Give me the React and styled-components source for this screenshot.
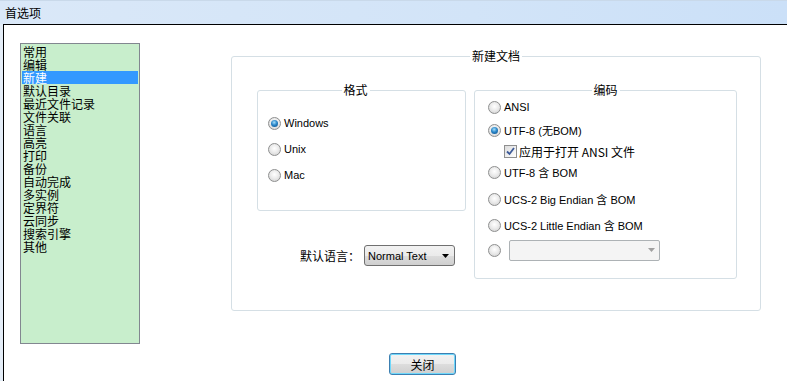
import React from 'react';
import styled, { createGlobalStyle } from 'styled-components';

const cjk = `'Noto Sans CJK SC', 'Liberation Sans', sans-serif`;

const GlobalStyle = createGlobalStyle`
  html, body {
    margin: 0;
    padding: 0;
    background: #ffffff;
  }
  body {
    font-family: 'Liberation Sans', 'Noto Sans CJK SC', sans-serif;
    font-size: 11px;
    color: #000000;
  }
`;

const Screen = styled.div`
  width: 787px;
  height: 381px;
  display: flex;
  flex-direction: column;
  overflow: hidden;
  background: #e4edf7;
`;

const TitleBar = styled.div`
  height: 24px;
  flex: none;
  display: flex;
  align-items: center;
  padding-left: 5px;
  font-family: ${cjk};
  font-size: 12px;
  background: linear-gradient(to right, #dae8f8, #d2e4f8 60%, #cbe0f8);
  box-shadow: inset 0 1px 0 #c9d9ea;
`;

const Body = styled.div`
  flex: 1;
  display: flex;
  align-items: flex-start;
  margin-left: 3px;
  padding: 18px 0 0 16px;
  border-left: 1px solid #000000;
  border-top: 1px solid #000000;
  background: #ffffff;
`;

const CategoryList = styled.ul`
  list-style: none;
  margin: 0;
  box-sizing: border-box;
  width: 120px;
  height: 301px;
  padding: 1px;
  border: 1px solid #828790;
  background: #c8eecc;
  flex: none;
`;

const CategoryItem = styled.li`
  height: 13px;
  line-height: 13px;
  padding-left: 1px;
  font-family: ${cjk};
  font-size: 12px;
  white-space: nowrap;
  color: ${p => (p.selected ? '#ffffff' : '#000000')};
  background: ${p => (p.selected ? '#3399ff' : 'transparent')};
`;

const Main = styled.div`
  margin: 13px 0 0 91px;
  display: flex;
  flex-direction: column;
`;

const Group = styled.div`
  position: relative;
  box-sizing: border-box;
  width: ${p => p.w}px;
  height: ${p => p.h}px;
  border: 1px solid #d5dfe5;
  border-radius: 3px;
  padding: ${p => p.pad};
`;

const Caption = styled.span`
  position: absolute;
  top: -8px;
  left: 50%;
  transform: translateX(calc(-50% + ${p => p.shift || 0}px));
  padding: 0 2px;
  background: #ffffff;
  font-family: ${cjk};
  font-size: 12px;
  line-height: 14px;
  white-space: nowrap;
`;

const Columns = styled.div`
  display: flex;
  align-items: flex-start;
  gap: 8px;
`;

const LeftColumn = styled.div`
  width: 209px;
  display: flex;
  flex-direction: column;
`;

const Option = styled.label`
  display: flex;
  align-items: center;
  height: ${p => p.h || 20}px;
  margin-top: ${p => p.top || 0}px;
  margin-left: ${p => p.indent || 0}px;
  white-space: nowrap;
`;

const RadioDot = styled.span`
  width: 13px;
  height: 13px;
  box-sizing: border-box;
  border-radius: 50%;
  border: 1px solid #8e8f8f;
  background: radial-gradient(circle at 50% 40%, #ffffff 0%, #ececec 45%, #cdcdcd 100%);
  display: inline-flex;
  align-items: center;
  justify-content: center;
  flex: none;
  margin-right: 3px;

  &::after {
    content: '';
    display: ${p => (p.checked ? 'block' : 'none')};
    width: 7px;
    height: 7px;
    border-radius: 50%;
    background: radial-gradient(circle at 45% 35%, #a6e0fb 0%, #2a86c9 45%, #0d4a80 100%);
  }
`;

const CheckBox = styled.span`
  width: 13px;
  height: 13px;
  box-sizing: border-box;
  border: 1px solid #8f8f8f;
  background: linear-gradient(135deg, #dcdcdc, #ffffff);
  display: inline-flex;
  align-items: center;
  justify-content: center;
  flex: none;
  margin-right: 2px;
`;

const CjkText = styled.span`
  font-family: ${cjk};
  font-size: 12px;
`;

const ComboBox = styled.div`
  box-sizing: border-box;
  width: 151px;
  height: 21px;
  margin-left: 5px;
  border: 1px solid #adb2b5;
  border-radius: 2px;
  background: #f4f4f4;
  display: flex;
  align-items: center;
  justify-content: flex-end;
  padding-right: 4px;
`;

const LangRow = styled.div`
  display: flex;
  justify-content: flex-end;
  align-items: center;
  gap: 4px;
  margin-top: 34px;
  padding-right: 11px;
`;

const Select = styled.div`
  box-sizing: border-box;
  width: 91px;
  height: 21px;
  border: 1px solid #707070;
  border-radius: 3px;
  background: linear-gradient(#f2f2f2, #ebebeb 50%, #dddddd 51%, #cfcfcf);
  display: flex;
  align-items: center;
  justify-content: space-between;
  padding: 0 5px 0 3px;
  font-size: 11px;
  color: #000;
`;

const ButtonRow = styled.div`
  margin-top: 42px;
  padding-left: 158px;
`;

const Button = styled.button`
  box-sizing: border-box;
  width: 67px;
  height: 22px;
  padding: 0;
  border: 1px solid #3c7fb1;
  border-radius: 3px;
  box-shadow: inset 0 0 0 1px #6fd8fb;
  background: linear-gradient(#f2f2f2, #ebebeb 50%, #dddddd 51%, #cfcfcf);
  font-family: ${cjk};
  font-size: 12px;
  color: #000;
`;

const Arrow = ({ color }) => (
  <svg width="7" height="4" viewBox="0 0 7 4">
    <path d="M0 0 H7 L3.5 4 Z" fill={color} />
  </svg>
);

const categories = [
  '常用', '编辑', '新建', '默认目录', '最近文件记录', '文件关联', '语言', '高亮',
  '打印', '备份', '自动完成', '多实例', '定界符', '云同步', '搜索引擎', '其他',
];

export default function App() {
  return (
    <Screen>
      <GlobalStyle />
      <TitleBar>首选项</TitleBar>
      <Body>
        <CategoryList>
          {categories.map(c => (
            <CategoryItem key={c} selected={c === '新建'}>{c}</CategoryItem>
          ))}
        </CategoryList>
        <Main>
          <Group w={530} h={255} pad="33px 0 0 25px">
            <Caption>新建文档</Caption>
            <Columns>
              <LeftColumn>
                <Group w={209} h={121} pad="19px 0 0 10px">
                  <Caption shift={-6}>格式</Caption>
                  <Option h={26}><RadioDot checked />Windows</Option>
                  <Option h={26}><RadioDot />Unix</Option>
                  <Option h={26}><RadioDot />Mac</Option>
                </Group>
                <LangRow>
                  <CjkText>默认语言：</CjkText>
                  <Select>
                    <span>Normal Text</span>
                    <Arrow color="#000" />
                  </Select>
                </LangRow>
              </LeftColumn>
              <Group w={263} h={189} pad="6px 0 0 13px">
                <Caption>编码</Caption>
                <Option><RadioDot />ANSI</Option>
                <Option top={3}><RadioDot checked />UTF-8 (无BOM)</Option>
                <Option top={1} indent={16}>
                  <CheckBox>
                    <svg width="9" height="9" viewBox="0 0 9 9">
                      <path d="M1 4.5 L3.5 7 L8 1" stroke="#3d5a98" strokeWidth="1.8" fill="none" />
                    </svg>
                  </CheckBox>
                  <CjkText>应用于打开 ANSI 文件</CjkText>
                </Option>
                <Option top={1}><RadioDot />UTF-8 含 BOM</Option>
                <Option top={7}><RadioDot />UCS-2 Big Endian 含 BOM</Option>
                <Option top={6}><RadioDot />UCS-2 Little Endian 含 BOM</Option>
                <Option top={5}>
                  <RadioDot />
                  <ComboBox><Arrow color="#a0a0a0" /></ComboBox>
                </Option>
              </Group>
            </Columns>
          </Group>
          <ButtonRow>
            <Button>关闭</Button>
          </ButtonRow>
        </Main>
      </Body>
    </Screen>
  );
}
